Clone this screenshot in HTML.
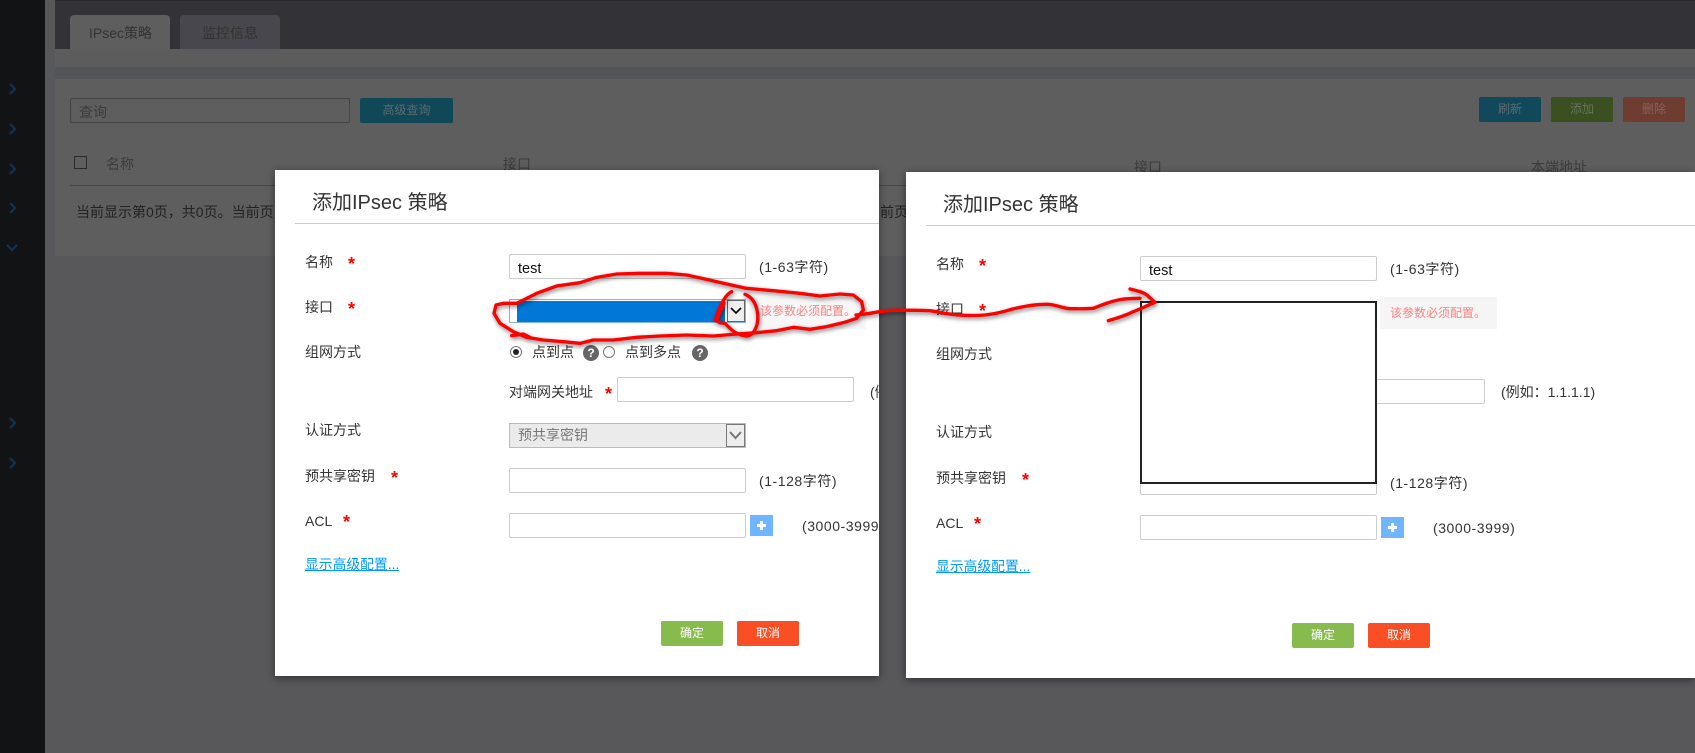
<!DOCTYPE html>
<html lang="zh"><head><meta charset="utf-8"><title>添加IPsec 策略</title>
<style>
*{box-sizing:border-box;margin:0;padding:0}
html,body{width:1695px;height:753px;overflow:hidden;background:#58585a;font-family:"Liberation Sans","Noto Sans CJK SC",sans-serif;font-size:14px;color:#333}
.a{position:absolute}
.t{position:absolute;line-height:20px;height:20px;white-space:nowrap}
.h{letter-spacing:.55px}
.btn{position:absolute;border-radius:2px;text-align:center;font-size:12px;line-height:25px}
.modal{position:absolute;background:#fff;overflow:hidden;box-shadow:0 2px 8px rgba(0,0,0,.45)}
.in{position:absolute;background:#fff;border:1px solid #ccc;border-radius:2px;width:237px;height:25px}
.s{position:absolute;color:#f00;font-size:18px;font-weight:bold;line-height:20px;height:20px;font-family:"Liberation Sans",sans-serif}
.q{position:absolute;width:16px;height:16px;border-radius:50%;background:#666;color:#fff;font-size:12px;font-weight:bold;text-align:center;line-height:16px}
.r{position:absolute;width:12px;height:12px;border-radius:50%;border:1px solid #777;background:#fff}
.line{position:absolute;left:20px;right:0;top:53px;height:1px;background:#ccc}
.title{position:absolute;left:37px;top:19px;font-size:20px;line-height:28px;white-space:nowrap;color:#333}
.link{color:#09f;text-decoration:underline;font-size:13.8px}
</style></head><body>

<div class="a" style="left:0;top:0;width:45px;height:753px;background:#121315"></div>
<svg class="a" style="left:0;top:0" width="45" height="753" fill="none" stroke="#0f3555" stroke-width="2">
<path d="M10 84l5 5-5 5M10 124l5 5-5 5M10 164l5 5-5 5M10 203l5 5-5 5M7 245l5 5 5-5M10 418l5 5-5 5M10 458l5 5-5 5"/></svg>

<div class="a" style="left:55px;top:0;width:1640px;height:49px;background:#333237;border-top:1px solid #29282d"></div>
<div class="a" style="left:70px;top:15px;width:100px;height:34px;background:#5e5e5e;border-radius:4px 4px 0 0"></div>
<div class="a" style="left:180px;top:15px;width:100px;height:34px;background:#48474d;border-radius:4px 4px 0 0"></div>
<div class="t" style="left:89px;top:23px;color:#333">IPsec策略</div>
<div class="t" style="left:202px;top:23px;color:#333">监控信息</div>
<div class="a" style="left:55px;top:49px;width:1640px;height:18px;background:#5c5c5c"></div>
<div class="a" style="left:55px;top:67px;width:1640px;height:12px;background:#545559"></div>
<div class="a" style="left:55px;top:79px;width:1640px;height:177px;background:#5e5e5e"></div>

<div class="a" style="left:70px;top:98px;width:280px;height:25px;border:1px solid #444;border-radius:2px"></div>
<div class="t" style="left:79px;top:102px;color:#3c3c3c">查询</div>
<div class="btn" style="left:360px;top:98px;width:93px;background:#114858;color:#5c6a70">高级查询</div>
<div class="btn" style="left:1479px;top:97px;width:62px;background:#11485a;color:#5c6a70">刷新</div>
<div class="btn" style="left:1551px;top:97px;width:62px;background:#3a5020;color:#66725a">添加</div>
<div class="btn" style="left:1623px;top:97px;width:62px;background:#6e3d30;color:#85605a">删除</div>

<div class="a" style="left:74px;top:156px;width:13px;height:13px;border:1px solid #2a2a2a"></div>
<div class="t" style="left:106px;top:154px;color:#3c3c3c">名称</div>
<div class="t" style="left:503px;top:154px;color:#3c3c3c">接口</div>
<div class="t" style="left:1134px;top:157px;color:#3c3c3c">接口</div>
<div class="t" style="left:1531px;top:157px;color:#3c3c3c">本端地址</div>
<div class="a" style="left:70px;top:185px;width:1625px;height:1px;background:#484848"></div>
<div class="t" style="left:76px;top:202px;color:#222">当前显示第0页，共0页。当前页</div>
<div class="t" style="left:880px;top:202px;color:#222">前页</div>

<!-- modal 1 -->
<div class="modal" style="left:275px;top:170px;width:604px;height:506px">
<div class="title">添加IPsec 策略</div><div class="line"></div>
<div class="t" style="left:30px;top:82px">名称</div><div class="s" style="left:73px;top:84px">*</div>
<div class="in" style="left:234px;top:84px"></div><div class="t" style="left:243px;top:89px;color:#111;font-size:14.5px">test</div>
<div class="t h" style="left:484px;top:87px">(1-63字符)</div>

<div class="t" style="left:30px;top:127px">接口</div><div class="s" style="left:73px;top:129px">*</div>
<div class="a" style="left:474px;top:127px;width:117px;height:32px;background:#f7f7f7"></div>
<div class="a" style="left:234px;top:129px;width:237px;height:24px;background:#fff;border:1px solid #7eb4ea"></div>
<div class="a" style="left:242px;top:131px;width:208px;height:21px;background:#0078d7"></div>
<div class="a" style="left:452px;top:130px;width:18px;height:22px;background:#eee;border:1px solid #666"></div>
<svg class="a" style="left:452px;top:130px" width="18" height="22" fill="none" stroke="#000" stroke-width="1.6"><path d="M4 8l5 5 5-5"/></svg>
<div class="t" style="left:485px;top:131px;font-size:12px;color:#ff8080">该参数必须配置。</div>

<div class="t" style="left:30px;top:172px">组网方式</div>
<div class="r" style="left:235px;top:176px"></div><div class="a" style="left:238px;top:179px;width:6px;height:6px;border-radius:50%;background:#222"></div>
<div class="t" style="left:257px;top:172px">点到点</div>
<div class="q" style="left:308px;top:175px">?</div>
<div class="r" style="left:328px;top:176px"></div>
<div class="t" style="left:350px;top:172px">点到多点</div>
<div class="q" style="left:417px;top:175px">?</div>

<div class="t" style="left:234px;top:212px">对端网关地址</div><div class="s" style="left:330px;top:214px">*</div>
<div class="in" style="left:342px;top:207px"></div><div class="t" style="left:595px;top:212px">(例如：1.1.1.1)</div>

<div class="t" style="left:30px;top:250px">认证方式</div>
<div class="a" style="left:234px;top:253px;width:237px;height:25px;background:#ebebeb;border:1px solid #bbb"></div>
<div class="t" style="left:243px;top:255px;color:#777">预共享密钥</div>
<div class="a" style="left:451px;top:254px;width:19px;height:23px;background:#eee;border:1px solid #777"></div>
<svg class="a" style="left:451px;top:254px" width="19" height="23" fill="none" stroke="#777" stroke-width="2"><path d="M4 8l5.500 6 5.500-6"/></svg>

<div class="t" style="left:30px;top:296px">预共享密钥</div><div class="s" style="left:116px;top:298px">*</div>
<div class="in" style="left:234px;top:298px"></div><div class="t h" style="left:484px;top:301px">(1-128字符)</div>

<div class="t" style="left:30px;top:341px">ACL</div><div class="s" style="left:68px;top:342px">*</div>
<div class="in" style="left:234px;top:343px"></div>
<div class="a" style="left:475px;top:345px;width:23px;height:21px;background:#70b5ff"></div>
<svg class="a" style="left:475px;top:345px" width="23" height="21" fill="#fff"><path d="M10 6h3v3h3v3h-3v3h-3v-3H7V9h3z"/></svg>
<div class="t h" style="left:527px;top:346px">(3000-3999)</div>

<div class="t link" style="left:30px;top:385px">显示高级配置...</div>
<div class="btn" style="left:386px;top:451px;width:62px;background:#88bb4e;color:#fff">确定</div>
<div class="btn" style="left:462px;top:451px;width:62px;background:#fa4e24;color:#fff">取消</div>
</div>

<!-- modal 2 -->
<div class="modal" style="left:906px;top:172px;width:789px;height:506px">
<div class="title">添加IPsec 策略</div><div class="line"></div>
<div class="t" style="left:30px;top:82px">名称</div><div class="s" style="left:73px;top:84px">*</div>
<div class="in" style="left:234px;top:84px"></div><div class="t" style="left:243px;top:89px;color:#111;font-size:14.5px">test</div>
<div class="t h" style="left:484px;top:87px">(1-63字符)</div>

<div class="t" style="left:30px;top:127px">接口</div><div class="s" style="left:73px;top:129px">*</div>
<div class="a" style="left:474px;top:125px;width:117px;height:32px;background:#f5f5f5"></div>
<div class="t" style="left:484px;top:131px;font-size:12px;color:#ff8080">该参数必须配置。</div>

<div class="t" style="left:30px;top:172px">组网方式</div>
<div class="in" style="left:342px;top:207px"></div><div class="t" style="left:595px;top:210px">(例如：1.1.1.1)</div>
<div class="t" style="left:30px;top:250px">认证方式</div>

<div class="t" style="left:30px;top:296px">预共享密钥</div><div class="s" style="left:116px;top:298px">*</div>
<div class="in" style="left:234px;top:298px"></div><div class="t h" style="left:484px;top:301px">(1-128字符)</div>

<div class="t" style="left:30px;top:341px">ACL</div><div class="s" style="left:68px;top:342px">*</div>
<div class="in" style="left:234px;top:343px"></div>
<div class="a" style="left:475px;top:345px;width:23px;height:21px;background:#70b5ff"></div>
<svg class="a" style="left:475px;top:345px" width="23" height="21" fill="#fff"><path d="M10 6h3v3h3v3h-3v3h-3v-3H7V9h3z"/></svg>
<div class="t h" style="left:527px;top:346px">(3000-3999)</div>

<div class="t link" style="left:30px;top:385px">显示高级配置...</div>
<div class="btn" style="left:386px;top:451px;width:62px;background:#88bb4e;color:#fff">确定</div>
<div class="btn" style="left:462px;top:451px;width:62px;background:#fa4e24;color:#fff">取消</div>

<div class="a" style="left:234px;top:129px;width:237px;height:183px;background:#fff;border:2px solid #222"></div>
</div>

<!-- red annotations -->
<svg class="a" style="left:0;top:0;filter:drop-shadow(1px 2px 2px rgba(0,0,0,.5))" width="1695" height="753" fill="none" stroke="#f00" stroke-linecap="round" stroke-linejoin="round">
<g transform="translate(480 260) scale(.33333)" stroke-width="10">
<path d="M110 130L170 100L230 78L300 68L350 52L410 42L480 40L560 40L620 45L680 58L740 72L800 85L880 92L960 100L1020 108L1080 102L1120 105L1145 125L1150 150L1130 175L1090 188L1040 200L990 208L940 202L890 212L830 218L770 222L700 228L620 225L540 228L470 232L400 240L340 240L300 250L250 245L190 240L140 232L100 215L60 190L42 160L48 135L70 130L110 130"/>
<path d="M95 227L130 222L150 232"/>
<path d="M755 95C735 105 725 130 712 160C703 180 712 190 735 190C750 205 765 225 800 228C825 225 838 190 832 155C828 130 815 110 795 103" />
<path d="M708 180L730 130" stroke-width="14"/>
</g>
<g transform="translate(840 270) scale(.33333)" stroke-width="10">
<path d="M48 135C90 132 120 122 160 121C200 120 240 121 270 122C300 126 320 134 370 136C420 138 450 135 490 125C530 112 580 103 620 103C650 103 665 115 690 116C710 116 740 117 760 115C790 103 810 95 840 89C860 85 880 85 900 85"/>
<path d="M870 57C890 62 910 66 922 76C930 84 938 90 945 97C925 105 905 115 880 125C860 135 830 145 805 152"/>
</g>
</svg>
</body></html>
